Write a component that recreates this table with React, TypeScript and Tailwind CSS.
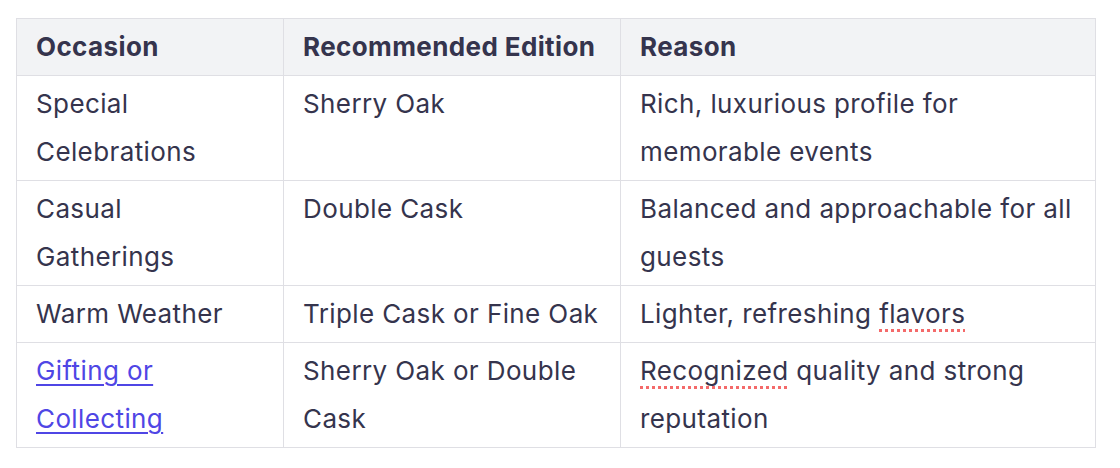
const rows = [
  { occasion: "Special Celebrations", edition: "Sherry Oak", reason: "Rich, luxurious profile for memorable events" },
  { occasion: "Casual Gatherings", edition: "Double Cask", reason: "Balanced and approachable for all guests" },
  { occasion: "Warm Weather", edition: "Triple Cask or Fine Oak", reason: "Lighter, refreshing flavors" },
  { occasion: "Gifting or Collecting", edition: "Sherry Oak or Double Cask", reason: "Recognized quality and strong reputation" },
];

const squiggle = "underline decoration-dotted decoration-[#f46a6a] decoration-[3px] underline-offset-[6px]";

// per-column padding, tuned so lines wrap where the screenshot wraps
const cell = "border border-[#dfdfe4] pl-[19px] py-1 text-left align-top";
const pads = ["pr-6", "pr-3", "pr-4"];

function Reason({ text }: { text: string }) {
  // mimic spellcheck marks seen in the screenshot
  if (text.endsWith("flavors")) {
    return (
      <>
        Lighter, refreshing <span className={squiggle}>flavors</span>
      </>
    );
  }
  if (text.startsWith("Recognized")) {
    return (
      <>
        <span className={squiggle}>Recognized</span> quality and strong reputation
      </>
    );
  }
  return <>{text}</>;
}

export default function App() {
  return (
    <div className="bg-white w-[1120px] h-[468px] pt-[18px] pl-4 font-['Inter',sans-serif] text-[#35344d]">
      <table className="w-[1080px] table-fixed border-collapse text-[26px] leading-[48px] tracking-[0.015em]">
        <colgroup>
          <col className="w-[267px]" />
          <col className="w-[337px]" />
          <col />
        </colgroup>
        <thead>
          <tr className="bg-[#f2f3f5]">
            {["Occasion", "Recommended Edition", "Reason"].map((h, j) => (
              <th key={h} className={`${cell} ${pads[j]} font-bold`}>
                {h}
              </th>
            ))}
          </tr>
        </thead>
        <tbody>
          {rows.map((r, i) => (
            <tr key={i}>
              <td className={`${cell} ${pads[0]}`}>
                {i === 3 ? (
                  <a href="#" className="text-[#4f46e5] underline underline-offset-[4px]">
                    {r.occasion}
                  </a>
                ) : (
                  r.occasion
                )}
              </td>
              <td className={`${cell} ${pads[1]}`}>{r.edition}</td>
              <td className={`${cell} ${pads[2]}`}>
                <Reason text={r.reason} />
              </td>
            </tr>
          ))}
        </tbody>
      </table>
    </div>
  );
}
